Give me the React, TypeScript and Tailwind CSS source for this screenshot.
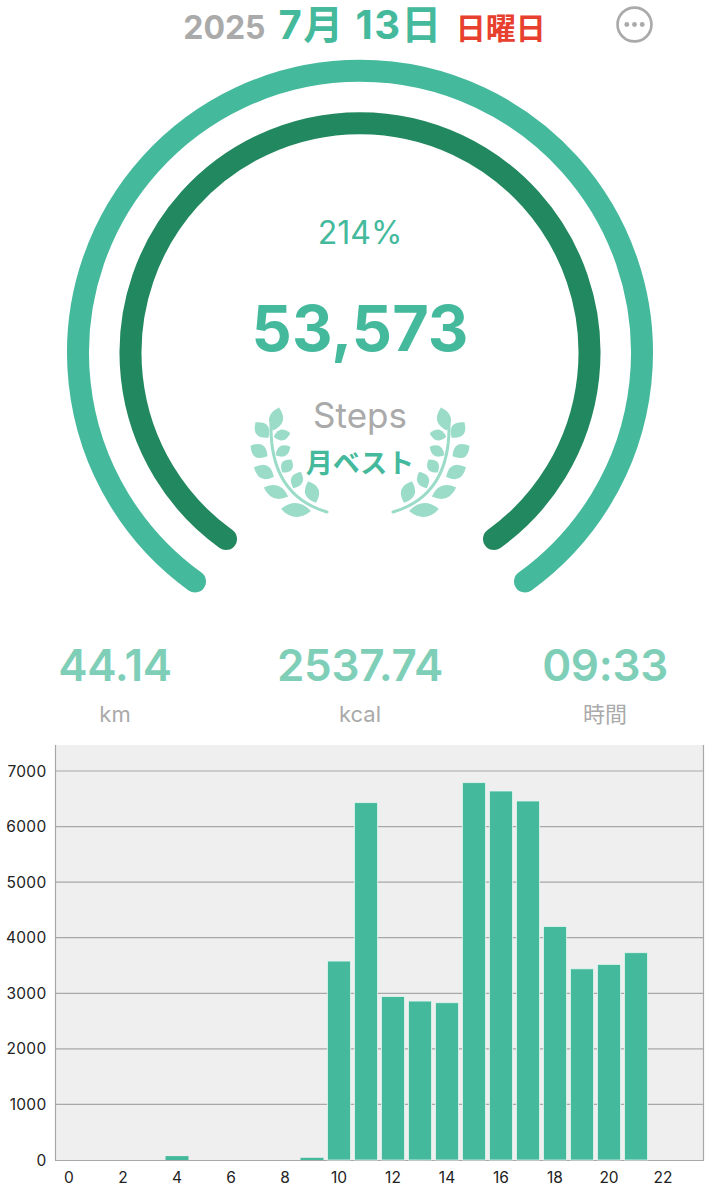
const bars: [number, number][] = [
  [4, 70], [9, 40], [10, 3580], [11, 6430], [12, 2940], [13, 2860], [14, 2830],
  [15, 6790], [16, 6640], [17, 6460], [18, 4200], [19, 3440], [20, 3520], [21, 3730],
];
const FONT = "font-['Inter','Noto_Sans_CJK_JP',sans-serif]";

const leaves: [number, number, number, number, number][] = [
  [276, 419, 12, 7, -75],
  [262, 430, 10, 7, 50],
  [282, 435, 8.5, 5.5, -12],
  [259, 451, 10, 7, 32],
  [283, 451, 8.5, 5.5, -30],
  [264, 472, 11, 7, 25],
  [287, 466, 8, 6, -55],
  [297, 480, 9, 6, -65],
  [276, 492, 13, 6.5, 20],
  [312, 492, 11.5, 7, -110],
  [296, 510, 15, 7, 4],
];

function Laurel() {
  return (
    <g fill="#9bdcc8">
      <path d="M327 512 Q270 495 271 425" fill="none" stroke="#9bdcc8" strokeWidth="3" strokeLinecap="round" />
      {leaves.map(([x, y, l, w, a], i) => (
        <path key={i} transform={`translate(${x} ${y}) rotate(${a})`} d={`M${-l} 0 Q0 ${-w * 2} ${l} 0 Q0 ${w * 2} ${-l} 0Z`} />
      ))}
    </g>
  );
}

function Gauge() {
  const arc = (r: number, x: number, y: number) => `M${x} ${y} A${r} ${r} 0 1 1 ${720 - x} ${y}`;
  return (
    <svg width="720" height="600" viewBox="0 0 720 600" className="absolute left-0 top-0">
      <path d={arc(282, 195, 581.5)} fill="none" stroke="#44b99c" strokeWidth="22" strokeLinecap="round" />
      <path d={arc(229.5, 226, 539)} fill="none" stroke="#22885f" strokeWidth="22" strokeLinecap="round" />
      <Laurel />
      <g transform="translate(720 0) scale(-1 1)">
        <Laurel />
      </g>
    </svg>
  );
}

function Stat({ value, label }: { value: string; label: string }) {
  return (
    <div className="flex flex-col items-center">
      <div className="text-[44px] leading-[52px] font-semibold tracking-[-0.3px] text-[#7fcfb8]">{value}</div>
      <div className="mt-[8px] text-[22px] leading-[30px] text-[#aaaaaa]">{label}</div>
    </div>
  );
}

function Chart() {
  const y = (v: number) => 1160 - (v * 389) / 7000;
  const x = (h: number) => 69 + 27 * h;
  return (
    <svg width="720" height="470" viewBox="0 730 720 470" className="block">
      <rect x="55" y="745" width="648" height="415" fill="#efefef" />
      {[1, 2, 3, 4, 5, 6, 7].map((k) => (
        <line key={k} x1="55" x2="703" y1={y(k * 1000)} y2={y(k * 1000)} stroke="#a8a8a8" strokeWidth="1.2" />
      ))}
      <line x1="55.5" x2="55.5" y1="745" y2="1160" stroke="#a8a8a8" strokeWidth="1.2" />
      <line x1="703.5" x2="703.5" y1="745" y2="1160" stroke="#a8a8a8" strokeWidth="1.2" />
      <line x1="55" x2="704" y1="1160.5" y2="1160.5" stroke="#a8a8a8" strokeWidth="1.2" />
      {bars.map(([h, v]) => (
        <rect
          key={h}
          x={x(h) - 11.5}
          y={y(v)}
          width="23"
          height={1160 - y(v)}
          fill="#44b99c"
          stroke={v > 100 ? "#e2f5ef" : "none"}
          strokeWidth="0.8"
        />
      ))}
      {[0, 1, 2, 3, 4, 5, 6, 7].map((k) => (
        <text key={k} x="46.5" y={y(k * 1000) + 5.5} textAnchor="end" fontSize="15.5" fill="#222222" letterSpacing="0.3">
          {k * 1000}
        </text>
      ))}
      {[0, 2, 4, 6, 8, 10, 12, 14, 16, 18, 20, 22].map((h) => (
        <text key={h} x={x(h)} y="1183" textAnchor="middle" fontSize="15.5" fill="#222222">
          {h}
        </text>
      ))}
    </svg>
  );
}

export default function App() {
  return (
    <div className={`w-[720px] h-[1200px] overflow-hidden bg-white ${FONT}`}>
      <header className="relative h-[50px] flex items-baseline justify-center gap-[13px] pt-[3px] pl-[9px]">
        <span className="text-[32px] leading-[44px] font-bold text-[#aaaaaa]">2025</span>
        <span className="text-[40px] leading-[44px] font-bold tracking-[1.4px] text-[#44b99c]">7月 13日</span>
        <span className="text-[30px] leading-[44px] font-bold text-[#e8402f]">日曜日</span>
        <svg width="37" height="37" viewBox="0 0 36 36" className="absolute left-[616px] top-[6px]">
          <circle cx="18" cy="18" r="16.5" fill="none" stroke="#aaaaaa" strokeWidth="2.6" />
          <circle cx="10.5" cy="18" r="2.4" fill="#aaaaaa" />
          <circle cx="18" cy="18" r="2.4" fill="#aaaaaa" />
          <circle cx="25.5" cy="18" r="2.4" fill="#aaaaaa" />
        </svg>
      </header>
      <section className="relative h-[576px]">
        <div className="absolute left-0 top-[-50px] w-[720px] h-[600px]">
          <Gauge />
        </div>
        <div className="relative flex flex-col items-center pt-[163px]">
          <div className="text-[32px] leading-[40px] text-[#44b99c]">214%</div>
          <div className="mt-[37px] text-[63px] leading-[76px] font-bold text-[#44b99c]">53,573</div>
          <div className="mt-[27px] text-[35px] leading-[44px] text-[#aaaaaa]">Steps</div>
          <div className="mt-[9px] text-[27px] leading-[36px] font-semibold text-[#44b99c]">月ベスト</div>
        </div>
      </section>
      <section className="grid grid-cols-[230px_230px_230px] gap-x-[15px] items-start h-[104px] pt-[13px]">
        <Stat value="44.14" label="km" />
        <Stat value="2537.74" label="kcal" />
        <Stat value="09:33" label="時間" />
      </section>
      <Chart />
    </div>
  );
}
